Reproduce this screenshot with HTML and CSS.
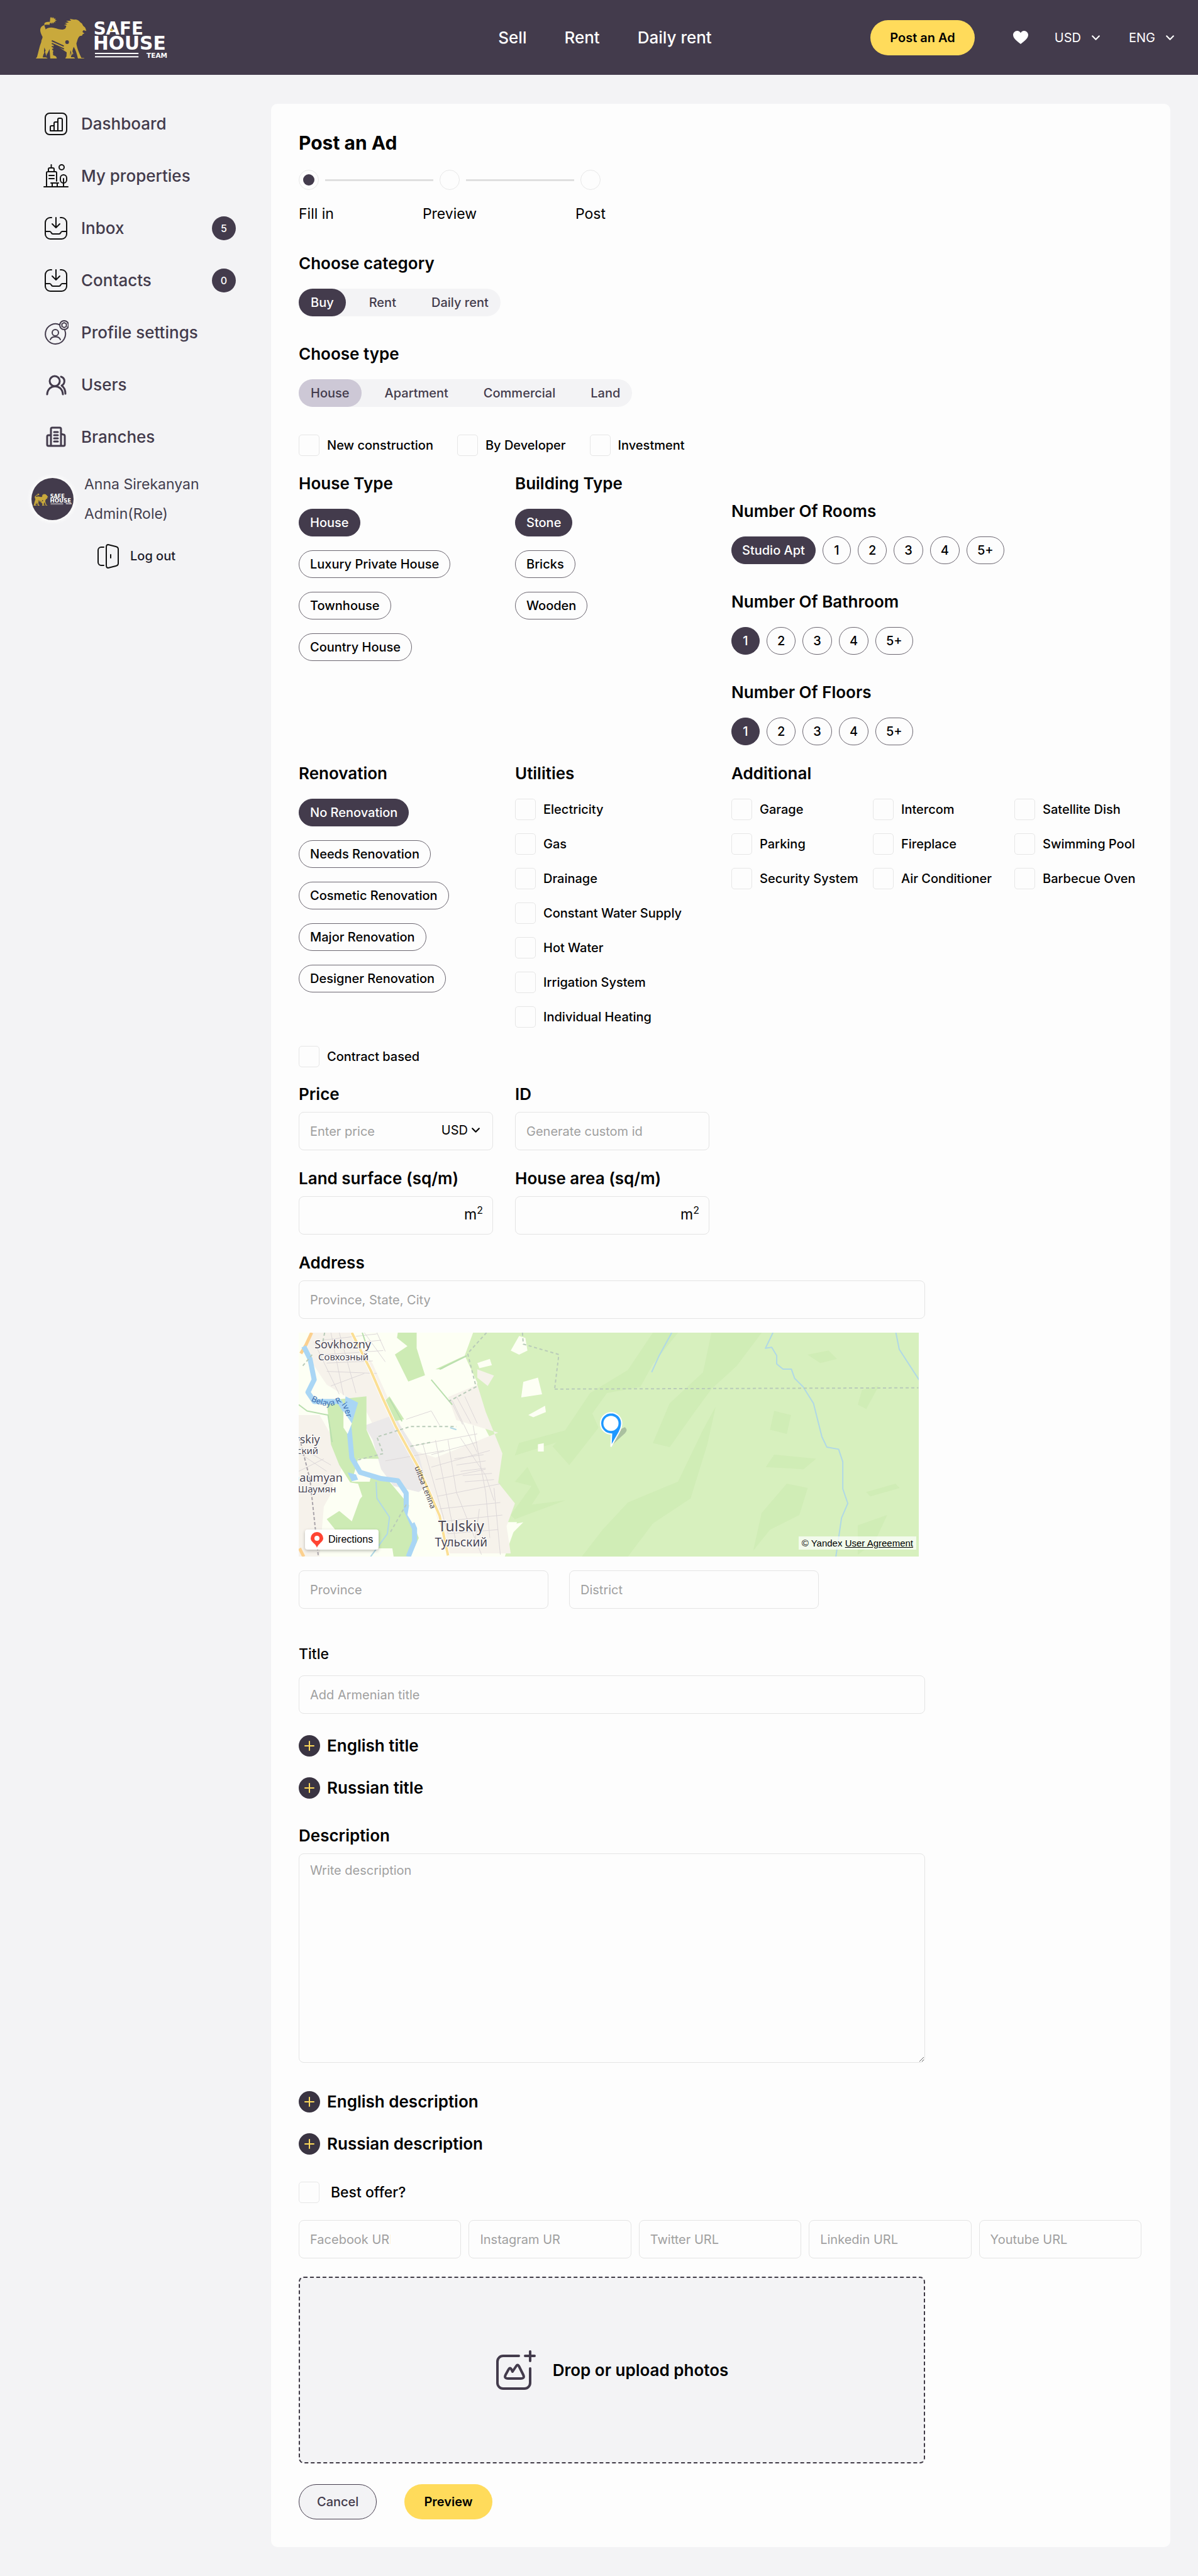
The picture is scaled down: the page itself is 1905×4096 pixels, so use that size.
FILE: index.html
```html
<!DOCTYPE html>
<html lang="en">
<head>
<meta charset="utf-8">
<meta name="viewport" content="width=device-width, initial-scale=1">
<title>Safe House Team – Post an Ad</title>
<link rel="stylesheet" href="styles.css">
</head>
<body>
<svg class="sprite" aria-hidden="true">
  <symbol id="lion" viewBox="48 36 252 204">
    <path fill="#c9a93c" d="M121 38l4 7 3-7 4 8 4-6 3 8 7-3-3 7 9 3-9 4 3 7-7-3-3 8-4-6-4 8-3-7-5 6-2-9c-12-2-24 0-26 8-2 11 5 20 6 28 8-8 26-11 42-7 20 4 36 13 52 4 4-4 5-9 6-14l-11-3 16-5-12-5 20-4-14-8 24 0-6-9 22 4c10-3 22 4 28 12 5 4 11 6 12 13 4 8 12 10 14 17l4 13-14-4-5 8 10 8-8 3-4 8c-9 0-12 2-16 7-6 8-7 20-11 30 2 22 16 52 24 70l12 1c4 2 6 6 5 10h-32c-5-27-12-49-22-64-8 17-6 30-6 48 8 2 14 5 14 16h-48c-2-6 0-13 5-18l1-20-60-40c-8 14-4 36-6 54 10 3 16 5 18 14l0 10h-31l-4-54-16 34 0 8c6 1 9 5 9 12H50c-1-7 2-12 6-14 8-26 12-53 21-74-1-10 7-16 6-25-7-13-15-30-9-43 7-14 25-18 43-15z"/>
    <path stroke="#433b4c" stroke-width="6" fill="none" d="M128 154l58 26M128 167l59 27M128 181l60 28M130 195l58 26M134 211l46 22"/>
    <circle cx="202" cy="161" r="9" fill="#433b4c"/>
    <path fill="#433b4c" d="M92 187l6 14-3 6 8 28H84l6-26zM102 210l6 25h-4zM232 196l8 38h-20l6-20zM218 200l4 10-6 18z"/>
    <path fill="#c9a93c" d="M88 202l4 8-6 14zM228 206l4 10-6 8z"/>
  </symbol>
  <symbol id="wordmark" viewBox="326 60 356 182" overflow="visible">
    <g fill="#fff" font-family="DejaVu Sans, sans-serif" font-weight="700">
      <text x="324" y="127" font-size="84">SAFE</text>
      <text x="322" y="201" font-size="90">HOUSE</text>
      <text x="680" y="238" font-size="32" text-anchor="end">TEAM</text>
    </g>
    <path stroke="#fff" stroke-width="6" d="M331 218h210M331 234h210"/>
    <circle cx="411" cy="104" r="7" fill="#c9a93c"/>
  </symbol>
  <symbol id="chevron" viewBox="0 0 14 9"><path d="M2 2l5 5 5-5" fill="none" stroke="currentColor" stroke-width="2" stroke-linecap="round" stroke-linejoin="round"/></symbol>
  <symbol id="plus" viewBox="0 0 34 34"><circle cx="17" cy="17" r="17" fill="#3a3442"/><path d="M10 17h14M17 10v14" stroke="#ffdb5b" stroke-width="2" stroke-linecap="round"/></symbol>
  <symbol id="inbox" viewBox="0 0 40 40"><path d="M13 3h-2a8 8 0 0 0-8 8v18a8 8 0 0 0 8 8h18a8 8 0 0 0 8-8V11a8 8 0 0 0-8-8h-2M20 3v15M14 13l6 6 6-6M3 25h7c3 0 2 4 5 4h10c3 0 2-4 5-4h7"/></symbol>
</svg>

<header class="topbar">
  <a class="brand" href="#" aria-label="Safe House Team">
    <svg class="brand-lion"><use href="#lion"/></svg>
    <svg class="brand-word"><use href="#wordmark"/></svg>
  </a>
  <nav class="topnav" aria-label="Main">
    <a href="#">Sell</a><a href="#">Rent</a><a href="#">Daily rent</a>
  </nav>
  <div class="tools">
    <button class="btn btn-yellow" type="button">Post an Ad</button>
    <a class="heart" href="#" aria-label="Favourites"><svg width="24" height="21" viewBox="0 0 24 21"><path fill="#fff" d="M12 21C6 16 0 12 0 6.500 0 3 3 0 6.500 0 9 0 11 1.500 12 3.500 13 1.500 15 0 17.500 0 21 0 24 3 24 6.500 24 12 18 16 12 21z"/></svg></a>
    <span class="pick"><select aria-label="Currency"><option>USD</option></select><svg><use href="#chevron"/></svg></span>
    <span class="pick"><select aria-label="Language"><option>ENG</option></select><svg><use href="#chevron"/></svg></span>
  </div>
</header>

<div class="page">
  <aside class="sidebar">
    <nav class="menu" aria-label="Account">
      <a href="#"><svg class="ico" viewBox="0 0 40 40"><rect x="3" y="3" width="34" height="34" rx="7"/><path d="M11 31v-6q0-2 2-2h4v8M17 31V19q0-2 2-2h4v14M23 31V13q0-2 2-2h2q3 0 3 2v18z M11 31h13"/></svg>Dashboard</a>
      <a href="#"><svg class="ico" viewBox="0 0 40 40"><path d="M1 37h38M5 37V15q0-2 2-2h12q2 0 2 2v13M8 13V9q0-2 2-2h5q2 0 2 2v4M12.500 7V2M9 19h8M9 24h8M12 31h12M14 31v6M22 31v6M32 24v13"/><circle cx="29" cy="6" r="4"/><rect x="27" y="18" width="10" height="13" rx="5"/></svg>My properties</a>
      <a href="#"><svg class="ico"><use href="#inbox"/></svg>Inbox<span class="badge">5</span></a>
      <a href="#"><svg class="ico"><use href="#inbox"/></svg>Contacts<span class="badge">0</span></a>
      <a href="#"><svg class="ico ico-soft" viewBox="0 0 40 40"><path d="M26 7.500A16 16 0 1 0 34 16"/><circle cx="19" cy="20" r="5"/><path d="M11 31c2-6 14-6 16 0"/><circle cx="33" cy="8" r="7"/><path d="M33 4l3.500 2v4L33 12l-3.500-2V6z"/></svg>Profile settings</a>
      <a href="#"><svg class="ico ico-bold" viewBox="0 0 40 40"><circle cx="18" cy="14" r="8"/><path d="M6 35c1-17 24-17 25 0M28 7c7 2 7 11 1 14 4 3 6 8 6 13"/></svg>Users</a>
      <a href="#"><svg class="ico ico-bold" viewBox="0 0 40 40"><path d="M12 34V7q0-2 2-2h12q2 0 2 2v27zM12 17H8q-2 0-2 2v13q0 2 2 2h24q2 0 2-2V19q0-3-2-3l-4-1M17 12h6M17 17h6M17 22h6M17 27h6"/></svg>Branches</a>
    </nav>
    <div class="user">
      <span class="avatar"><svg class="avatar-lion"><use href="#lion"/></svg><svg class="avatar-word"><use href="#wordmark"/></svg></span>
      <div class="user-text"><span>Anna Sirekanyan</span><span>Admin(Role)</span></div>
    </div>
    <button class="logout" type="button"><svg class="ico" viewBox="0 0 40 40"><path d="M13 6H9a5 5 0 0 0-5 5v19a5 5 0 0 0 5 5h4M20 2l12 3q4 1 4 4v23q0 3-4 4l-12 3q-3 0-3-4V6q0-4 3-4zM24 18v5"/></svg>Log out</button>
  </aside>

  <main class="card">
    <form class="form" onsubmit="return false">
      <h1>Post an Ad</h1>
      <div class="steps">
        <div class="step step-first"><span class="dot dot-on"></span><span>Fill in</span></div>
        <span class="line"></span>
        <div class="step"><span class="dot"></span><span>Preview</span></div>
        <span class="line"></span>
        <div class="step"><span class="dot"></span><span>Post</span></div>
      </div>

      <section class="group">
        <h2>Choose category</h2>
        <div class="segment"><button type="button" class="on">Buy</button><button type="button">Rent</button><button type="button">Daily rent</button></div>
      </section>
      <section class="group">
        <h2>Choose type</h2>
        <div class="segment"><button type="button" class="soft">House</button><button type="button">Apartment</button><button type="button">Commercial</button><button type="button">Land</button></div>
      </section>
      <div class="flags">
        <label class="check"><input type="checkbox">New construction</label>
        <label class="check"><input type="checkbox">By Developer</label>
        <label class="check"><input type="checkbox">Investment</label>
      </div>

      <div class="columns">
        <section>
          <h2>House Type</h2>
          <div class="pills-col"><button type="button" class="pill on">House</button><button type="button" class="pill">Luxury Private House</button><button type="button" class="pill">Townhouse</button><button type="button" class="pill">Country House</button></div>
        </section>
        <section>
          <h2>Building Type</h2>
          <div class="pills-col"><button type="button" class="pill on">Stone</button><button type="button" class="pill">Bricks</button><button type="button" class="pill">Wooden</button></div>
        </section>
        <div class="counts">
          <section>
            <h2>Number Of Rooms</h2>
            <div class="pills-row"><button type="button" class="pill on">Studio Apt</button><button type="button" class="pill">1</button><button type="button" class="pill">2</button><button type="button" class="pill">3</button><button type="button" class="pill">4</button><button type="button" class="pill">5+</button></div>
          </section>
          <section>
            <h2>Number Of Bathroom</h2>
            <div class="pills-row"><button type="button" class="pill on">1</button><button type="button" class="pill">2</button><button type="button" class="pill">3</button><button type="button" class="pill">4</button><button type="button" class="pill">5+</button></div>
          </section>
          <section>
            <h2>Number Of Floors</h2>
            <div class="pills-row"><button type="button" class="pill on">1</button><button type="button" class="pill">2</button><button type="button" class="pill">3</button><button type="button" class="pill">4</button><button type="button" class="pill">5+</button></div>
          </section>
        </div>
      </div>

      <div class="columns">
        <section>
          <h2>Renovation</h2>
          <div class="pills-col"><button type="button" class="pill on">No Renovation</button><button type="button" class="pill">Needs Renovation</button><button type="button" class="pill">Cosmetic Renovation</button><button type="button" class="pill">Major Renovation</button><button type="button" class="pill">Designer Renovation</button></div>
        </section>
        <section>
          <h2>Utilities</h2>
          <div class="checks">
            <label class="check"><input type="checkbox">Electricity</label>
            <label class="check"><input type="checkbox">Gas</label>
            <label class="check"><input type="checkbox">Drainage</label>
            <label class="check"><input type="checkbox">Constant Water Supply</label>
            <label class="check"><input type="checkbox">Hot Water</label>
            <label class="check"><input type="checkbox">Irrigation System</label>
            <label class="check"><input type="checkbox">Individual Heating</label>
          </div>
        </section>
        <section>
          <h2>Additional</h2>
          <div class="checks checks-3">
            <label class="check"><input type="checkbox">Garage</label>
            <label class="check"><input type="checkbox">Intercom</label>
            <label class="check"><input type="checkbox">Satellite Dish</label>
            <label class="check"><input type="checkbox">Parking</label>
            <label class="check"><input type="checkbox">Fireplace</label>
            <label class="check"><input type="checkbox">Swimming Pool</label>
            <label class="check"><input type="checkbox">Security System</label>
            <label class="check"><input type="checkbox">Air Conditioner</label>
            <label class="check"><input type="checkbox">Barbecue Oven</label>
          </div>
        </section>
      </div>

      <label class="check check-contract"><input type="checkbox">Contract based</label>

      <div class="columns">
        <div class="field">
          <label for="price">Price</label>
          <div class="box"><input id="price" type="text" placeholder="Enter price"><span class="pick"><select aria-label="Price currency"><option>USD</option></select><svg><use href="#chevron"/></svg></span></div>
        </div>
        <div class="field">
          <label for="cid">ID</label>
          <div class="box"><input id="cid" type="text" placeholder="Generate custom id"></div>
        </div>
      </div>
      <div class="columns">
        <div class="field">
          <label for="land">Land surface (sq/m)</label>
          <div class="box"><input id="land" type="text"><span class="unit">m<sup>2</sup></span></div>
        </div>
        <div class="field">
          <label for="area">House area (sq/m)</label>
          <div class="box"><input id="area" type="text"><span class="unit">m<sup>2</sup></span></div>
        </div>
      </div>

      <section class="address limit">
        <div class="field">
          <label for="addr">Address</label>
          <div class="box"><input id="addr" type="text" placeholder="Province, State, City"></div>
        </div>
        <div class="map">
          <svg class="map-art" viewBox="0 0 985 356" preserveAspectRatio="xMinYMin slice" role="img" aria-label="Map of Tulskiy">
            <g class="terrain" transform="scale(.6643 .3307) translate(-13 -54)">
              <path fill="#d7f0be" d="M0 40h1520v1120H0z"/>
              <path fill="#c9e9ae" opacity=".5" d="M860 54h60l-60 150-30 110-80 30-50 140-60 90-110 70 10-60 110-60 60-180 90-110zM1000 54h120l-60 160-60 110-40 110-60 170-40-20 40-190 80-150zM1010 410l-20 180-40 260-90 120-60 160h-110l50-130 60-130 120-100 60-250zM560 700l-30 70 40 20-50 140 10 20 120-90-80 20 20-60zM620 600l90-180 20 90-70 180zM1150 640l100 20-30 50-90-10zM1180 780l50 20-20 130-70 70-40 100 20-180zM1370 820l70-40 10 20-70 40zM1350 980l70-50-30 130-40 60zM1150 430l40 20-10 90-40-20zM1360 330l40-20-30 110-20-20zM1230 160l50-20 20 40-40 20z"/>
              <path fill="#fdfff4" d="M0 54h430l-20 110 30 130-10 110 60 230-10 140 30 80-5 110 30 0-30 170H0z"/>
              <path fill="#fdfff4" d="M520 140l20-70 15 10 5 60-20 20zM550 290l35-20 10 80-50 15zM562 450l40-45 2 30-30 25zM585 590l14-5v40h-14zM440 200l30-20 5 30-30 15zM510 1040l0-60 40-15-25 50z"/>
              <path fill="#f6f2eb" d="M40 54h100l50 150 60 270 30 140 60 40 150-120-100-60-20-110 70-60 20 130 40 200-10 140 40 100-20 110 10 130H370l-60-400-100-50-20-170-20-80-90-110-50-150zM13 450l50 0 60 210-20 120-30 110-10 240H13zM440 230l40 30-15 50-25-40z"/>
              <path fill="#ebe9e9" d="M170 500l70-50 60 190 20 150-20 30-60-30-30-80-20-140z"/>
              <path fill="#cdebb4" d="M250 54h45v75l20 130-40 30-32-130 30-40-25-40zM80 380l95-20 0 160 30 140-50 0-15 110 90 0 50 120-10 90 10 110-100 0-10-70-50 30-40-100 30-40 30 50 20-110-50-160-20-100zM230 360l35 110-25 10-20-100zM185 750l40 20 35 110 5 170-60 0-30-60-20-80 20-70zM230 1000l50-70 20 110-20 90h-40zM340 230l75-70-60 70z"/>
              <g class="map-lines">
                <path stroke="#dcd7d8" stroke-width="1" d="M70 90l130-30M75 120l135-30M75 160l140-20M80 200l110-10M80 240l120 10M90 54l30 300M110 54l40 290M50 100l60 250M170 54l50 140M200 54l20 90M90 310l80-60M380 380l60 250M390 360l35 130M375 375l30 120M410 360l30 130M280 600l160-60M330 700l140-80M340 760l120-50M345 840l150-60M350 900l145-30M360 960l140-30M370 1020l120-20M310 590l60 430M340 570l50 500M370 570l20 250 60 300M400 560l60 180 20 120M430 500l30 320 10 220M385 660l70-20M390 690l70-20M400 720l60-15M405 740l70-10M410 770l70-10M330 640l110-60M220 670l140-50M13 720l60-60M20 640l60 80M30 620l60 70M445 900l-10 150M480 800l15 320M350 500l-20-70-60 40"/>
                <path stroke="#b9dfae" stroke-width="2" d="M165 54l10 60M230 370l30 110M13 400l20 30 50 20 10 130M330 280l50 120M350 230l65-65"/>
                <path stroke="#fff" stroke-width="6" d="M140 54l45 180 30 140 30 130 30 110 25 90 50 230 20 190"/>
                <path stroke="#fbdf94" stroke-width="4" d="M140 54l45 180 30 140 30 130 30 110 25 90 50 230 20 190"/>
                <path stroke="#fcd08e" stroke-width="5" d="M44 54l-14 60-12 40M15 1090l10 40"/>
                <path stroke="#a9d6f5" stroke-width="8" d="M25 120l15 60 10 100-15 60 15 45 60 0 20 60 5 100 5 110 20 70 50 30 40 10 20 60 0 80 20 90 0 60-15 75"/>
                <path stroke="#b0d8e6" stroke-width="2" d="M905 54l-30 110-18 80M1147 54l-18 75 15-5 12 40 0 40 15 25 20 0 8 45 20 40 25 80 20 160 12 50 28 10 10 60 0 130 12 70-15 70-8 110-8 110M1441 54l8 80 50 155M198 770l2 80 30 90-5 80-40 110M375 510l15 10"/>
                <path stroke="#b9cbb9" stroke-width="2" stroke-dasharray="5 4" d="M625 325l870-6M548 54l2 55 85 50-10 165M462 54l-45 100 20 160-65 70M155 665l60-30-15-80 80-50 110 0M75 54l-5 50M45 160l-25 60M270 880l-40 140M280 600l50-20"/>
                <path stroke="#a9a4aa" stroke-width="2" stroke-dasharray="5 3" d="M15 560l25 200 20 370"/>
              </g>
              <path fill="#a9d6f5" d="M125 360l30 30-15 100-20-30zM130 725l20 10 5 25-15 8zM108 780l18-8-2 30-14 4z"/>
              <path fill="#fdfff4" d="M120 430l20 60-10 50-10-30zM95 760l60 20 10 60-30 70-40 0zM280 850l15 0 5 100-15 20-12-40z"/>
            </g>
            <g class="map-labels">
              <text x="70" y="25" font-size="18">Sovkhozny</text>
              <text x="71" y="44" font-size="15">Совхозный</text>
              <text x="14" y="176" font-size="18">rskiy</text>
              <text x="14" y="193" font-size="15">ский</text>
              <text x="30" y="237" font-size="18">haumyan</text>
              <text x="29" y="254" font-size="15">Шаумян</text>
              <text x="258" y="316" font-size="23">Tulskiy</text>
              <text x="258" y="340" font-size="19">Тульский</text>
            </g>
            <path id="road" fill="none" d="M184 214l32 82"/>
            <text class="map-road"><textPath href="#road">ulitsa Lenina</textPath></text>
            <path id="river" fill="none" d="M19 108q26 14 46 4q12 8 14 50"/>
            <text class="map-river"><textPath href="#river">Belaya River</textPath></text>
            <path fill="#566" opacity=".35" d="M496 180l22-20q6-6 0-10l-12 6z"/>
            <path fill="#1e98ff" stroke="#fff" stroke-width="2" d="M496 127a17 17 0 0 1 17 17q0 6-4 14l-13 23 1-20a17 17 0 0 1-1-34z"/>
            <circle cx="496" cy="144" r="12" fill="#fff"/>
          </svg>
          <button class="directions" type="button"><svg width="20" height="25" viewBox="0 0 20 25"><path fill="#f43" d="M10 0a10 10 0 0 1 10 10c0 6-8 8-10 15C8 18 0 16 0 10A10 10 0 0 1 10 0z"/><circle cx="10" cy="10" r="4" fill="#fff"/></svg>Directions</button>
          <span class="copyright">© Yandex <a href="#">User Agreement</a></span>
        </div>
        <div class="pair">
          <div class="box"><input type="text" aria-label="Province" placeholder="Province"></div>
          <div class="box"><input type="text" aria-label="District" placeholder="District"></div>
        </div>
      </section>

      <section class="title-block limit">
        <label for="title-am">Title</label>
        <div class="box"><input id="title-am" type="text" placeholder="Add Armenian title"></div>
      </section>
      <div class="adders">
        <button type="button" class="adder"><svg><use href="#plus"/></svg>English title</button>
        <button type="button" class="adder"><svg><use href="#plus"/></svg>Russian title</button>
      </div>

      <div class="field limit description">
        <label for="desc">Description</label>
        <textarea id="desc" placeholder="Write description"></textarea>
      </div>
      <div class="adders">
        <button type="button" class="adder"><svg><use href="#plus"/></svg>English description</button>
        <button type="button" class="adder"><svg><use href="#plus"/></svg>Russian description</button>
      </div>

      <label class="check check-big"><input type="checkbox">Best offer?</label>
      <div class="socials">
        <div class="box"><input type="text" aria-label="Facebook URL" placeholder="Facebook URL"></div>
        <div class="box"><input type="text" aria-label="Instagram URL" placeholder="Instagram URL"></div>
        <div class="box"><input type="text" aria-label="Twitter URL" placeholder="Twitter URL"></div>
        <div class="box"><input type="text" aria-label="Linkedin URL" placeholder="Linkedin URL"></div>
        <div class="box"><input type="text" aria-label="Youtube URL" placeholder="Youtube URL"></div>
      </div>
      <button type="button" class="drop limit">
        <svg width="64" height="64" viewBox="0 0 64 64" fill="none" stroke="#433b4c" stroke-width="4" stroke-linecap="round" stroke-linejoin="round"><path d="M37 9H12a9 9 0 0 0-9 9v34a9 9 0 0 0 9 9h34a9 9 0 0 0 9-9V29M55 2v15M47 9h15"/><path d="M16 39l5-9q2-3 4 0l2 4 6-9q2-3 4 0l7 14q3 6-4 6H20q-7 0-4-6z"/></svg>
        Drop or upload photos
      </button>
      <div class="actions">
        <button type="button" class="btn btn-line">Cancel</button>
        <button type="submit" class="btn btn-yellow">Preview</button>
      </div>
    </form>
  </main>
</div>
</body>
</html>
```
FILE: styles.css
```css
:root {
  --plum: #433b4c;
  --yellow: #ffdb5b;
  --page: #f3f3f5;
  --border: #e4e4e4;
}
* { box-sizing: border-box; }
body {
  margin: 0;
  background: var(--page);
  color: #000;
  font: 500 20px/28px Inter, "Open Sans", sans-serif;
}
button, input, select, textarea { font: inherit; color: inherit; }
button { cursor: pointer; }
a { color: inherit; text-decoration: none; }
h1, h2 { margin: 0; line-height: 32px; }
h1 { font-size: 30px; font-weight: 700; }
h2 { font-size: 26px; font-weight: 600; }
.sprite { position: absolute; width: 0; height: 0; }

/* header */
.topbar {
  display: grid;
  grid-template-columns: 1fr auto 1fr;
  align-items: center;
  height: 119px;
  padding: 0 37px 0 56px;
  background: var(--plum);
  color: #fff;
}
.brand { display: flex; align-items: flex-end; gap: 10px; }
.brand-lion { width: 83px; height: 67px; }
.brand-word { width: 118px; height: 60px; overflow: visible; }
.topnav { display: flex; gap: 60px; font-size: 26px; }
.tools { display: flex; align-items: center; justify-content: flex-end; }
.btn {
  height: 56px;
  padding: 0 28px;
  border: 0;
  border-radius: 28px;
}
.btn-yellow { padding: 0 31px; background: var(--yellow); color: #000; font-weight: 600; }
.btn-line { border: 1px solid var(--plum); background: var(--page); color: var(--plum); }
.heart { display: flex; margin: 0 42px 0 61px; }
.pick { display: flex; align-items: center; gap: 16px; font-weight: 400; }
.pick + .pick { margin-left: 45px; }
.pick select {
  padding: 0;
  border: 0;
  background: none;
  appearance: none;
  field-sizing: content;
}
.pick option { color: #000; }
.pick svg { width: 15px; height: 10px; }

/* shell */
.page { display: flex; align-items: flex-start; padding: 46px 44px 45px 0; }
.sidebar { flex: 0 0 431px; padding-top: 12px; color: var(--plum); }
.card { flex: 1; min-width: 0; padding: 46px 46px 44px 44px; border-radius: 10px; background: #fdfdfd; }

/* sidebar */
.menu { display: flex; flex-direction: column; gap: 43px; padding: 0 56px 0 69px; font-size: 26px; }
.menu a { display: flex; align-items: center; gap: 20px; height: 40px; }
.ico { width: 40px; height: 40px; flex: none; fill: none; stroke: #111; stroke-width: 2; stroke-linecap: round; stroke-linejoin: round; }
.ico-soft { stroke: var(--plum); }
.ico-bold { stroke: var(--plum); stroke-width: 3; }
.badge {
  display: grid;
  place-items: center;
  width: 38px;
  height: 38px;
  margin-left: auto;
  border-radius: 50%;
  background: var(--plum);
  color: #fff;
  font-size: 16px;
}
.user { display: flex; align-items: center; gap: 17px; margin: 41px 0 0 50px; }
.avatar {
  display: flex;
  align-items: center;
  justify-content: center;
  gap: 3px;
  width: 67px;
  height: 67px;
  border-radius: 50%;
  background: var(--plum);
  box-shadow: 0 0 4px 4px #fafafa;
}
.avatar-lion { width: 24px; height: 20px; }
.avatar-word { width: 34px; height: 18px; overflow: visible; }
.user-text { display: flex; flex-direction: column; gap: 19px; font-size: 23px; font-weight: 400; color: #433f4f; }
.logout {
  display: flex;
  align-items: center;
  gap: 15px;
  margin: 33px 0 0 152px;
  padding: 0;
  border: 0;
  background: none;
  color: #1c1b2a;
}

/* form */
.form { display: flex; flex-direction: column; align-items: stretch; }
.limit { width: 100%; max-width: 996px; }
.steps { display: flex; margin: 27px 0 49px; font-size: 23px; font-weight: 400; }
.step { display: flex; flex-direction: column; align-items: center; gap: 24px; width: 32px; white-space: nowrap; }
.step-first { align-items: flex-start; }
.dot { display: grid; place-items: center; width: 32px; height: 32px; border: 1px solid #e8e8e8; border-radius: 50%; }
.dot-on::before { content: ""; width: 18px; height: 18px; border-radius: 50%; background: var(--plum); }
.line { width: 172px; height: 3px; margin: 15px 10px 0; background: #dfdfdf; }

.group { margin-bottom: 44px; }
.group h2, .columns h2 { margin-bottom: 24px; }
.segment { display: flex; gap: 18px; width: fit-content; height: 44px; border-radius: 22px; background: var(--page); }
.segment button { padding: 0 19px; border: 0; border-radius: 22px; background: none; color: var(--plum); }
.segment .on { background: var(--plum); color: #fff; }
.segment .soft { background: #cdc8d6; }

.flags { display: flex; gap: 38px; margin-bottom: 28px; }
.check { display: flex; align-items: center; gap: 12px; height: 34px; white-space: nowrap; }
.check input {
  flex: none;
  width: 33px;
  height: 34px;
  margin: 0;
  border: 1px solid #e6e6e6;
  border-radius: 5px;
  background: #fdfdfd;
  appearance: none;
}
.check input:checked { background: var(--plum); }
.check-contract { margin-bottom: 27px; }
.check-big { gap: 18px; font-size: 23px; }

.columns { display: grid; grid-template-columns: 309px 309px 1fr; column-gap: 35px; margin-bottom: 29px; }
.pills-col { display: flex; flex-direction: column; align-items: flex-start; gap: 22px; }
.pills-row { display: flex; gap: 11px; }
.pill { height: 44px; padding: 0 17px; border: 1px solid #6b6670; border-radius: 22px; background: #fdfdfd; }
.pill.on { border-color: var(--plum); background: var(--plum); color: #fff; }
.counts { display: flex; flex-direction: column; gap: 44px; padding-top: 44px; }
.counts .pill { min-width: 45px; padding: 0 16px; }
.checks { display: grid; row-gap: 21px; }
.checks-3 { grid-template-columns: 225px 225px 1fr; }

.field > label { display: block; margin-bottom: 12px; font-size: 26px; font-weight: 600; line-height: 32px; }
.box { position: relative; display: flex; }
.box input, textarea {
  width: 100%;
  min-width: 0;
  height: 61px;
  padding: 0 17px;
  border: 1px solid var(--border);
  border-radius: 8px;
  outline-color: var(--plum);
  background: #fdfdfd;
  font-weight: 400;
}
::placeholder { color: #a0a0a0; opacity: 1; }
.box .pick, .unit { position: absolute; right: 20px; top: 15px; }
.box .pick { gap: 5px; }
.unit { right: 16px; top: 15px; font-size: 23px; font-weight: 400; }
.unit sup { font-size: 16px; line-height: 0; }

.address { display: flex; flex-direction: column; gap: 22px; margin-bottom: 58px; }
.map { position: relative; width: 99%; aspect-ratio: 985 / 356; overflow: hidden; }
.map-art { display: block; width: 100%; height: 100%; }
.map-lines path { fill: none; vector-effect: non-scaling-stroke; stroke-linejoin: round; }
.map-labels { fill: #4a4652; font-family: "Noto Sans", sans-serif; font-weight: 400; text-anchor: middle; paint-order: stroke; stroke: #fff; stroke-width: 2px; }
.map-road { font: 400 12px "Noto Sans", sans-serif; fill: #4a4652; }
.map-river { font: 400 13px "Noto Sans", sans-serif; fill: #3f6fb0; }
.directions {
  position: absolute;
  left: 10px;
  bottom: 11px;
  display: flex;
  align-items: center;
  gap: 8px;
  height: 32px;
  padding: 0 9px;
  border: 0;
  border-radius: 4px;
  background: #fff;
  box-shadow: 0 2px 5px rgba(0, 0, 0, .25);
  font: 400 16px "Liberation Sans", sans-serif;
}
.copyright {
  position: absolute;
  right: 4px;
  bottom: 11px;
  padding: 0 5px;
  background: rgba(255, 255, 255, .7);
  font: 400 15px/21px "Liberation Sans", sans-serif;
}
.copyright a { text-decoration: underline; }
.pair { display: grid; grid-template-columns: 397px 397px; gap: 33px; }
.title-block { display: flex; flex-direction: column; gap: 20px; margin-bottom: 34px; font-size: 23px; }
.title-block .box { font-size: 20px; }
.adders { display: flex; flex-direction: column; align-items: flex-start; gap: 33px; margin-bottom: 43px; }
.adder { display: flex; align-items: center; gap: 11px; height: 34px; padding: 0; border: 0; background: none; font-size: 26px; font-weight: 600; }
.adder svg { width: 34px; height: 34px; }
textarea { display: block; height: 333px; padding: 12px 17px; resize: both; }
.description { margin-bottom: 45px; }
.socials { display: grid; grid-template-columns: repeat(5, 1fr); gap: 12px; margin: 27px 0 29px; }
.socials input { padding-right: 111px; }
.drop {
  display: flex;
  align-items: center;
  justify-content: center;
  gap: 27px;
  height: 297px;
  border: 2px dashed #3f3a45;
  border-radius: 8px;
  background: var(--page);
  font-size: 26px;
  font-weight: 600;
}
.actions { display: flex; gap: 44px; margin-top: 33px; }
```
